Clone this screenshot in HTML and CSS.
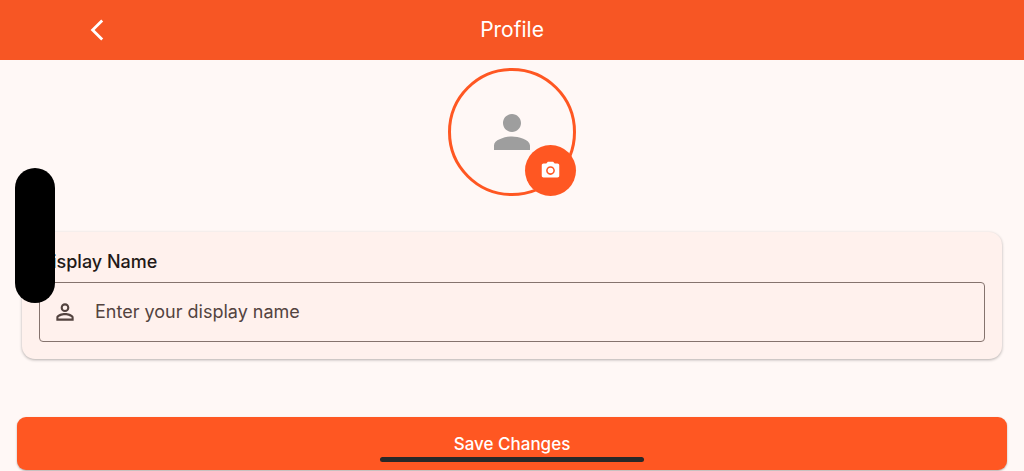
FILE: index.html
```html
<!DOCTYPE html>
<html lang="en">
<head>
<meta charset="utf-8">
<meta name="viewport" content="width=device-width, initial-scale=1">
<title>Profile</title>
<link rel="stylesheet" href="styles.css">
</head>
<body>
<header class="app-bar">
  <button class="back" type="button" aria-label="Back">
    <svg width="14" height="22" viewBox="0 0 14 22" fill="none" stroke="currentColor" stroke-width="2.8"><path d="M12.2 1.4 2.6 11l9.600 9.600"/></svg>
  </button>
  <h1 class="title">Profile</h1>
</header>
<main class="content">
  <div class="avatar">
    <svg class="person" viewBox="4 4 16 16" fill="currentColor" aria-hidden="true"><path d="M12 12c2.21 0 4-1.790 4-4s-1.790-4-4-4-4 1.790-4 4 1.790 4 4 4zm0 2c-2.670 0-8 1.340-8 4v2h16v-2c0-2.660-5.330-4-8-4z"/></svg>
    <button class="camera" type="button" aria-label="Change photo">
      <svg width="21" height="21" viewBox="0 0 24 24" fill="currentColor"><path fill-rule="evenodd" d="M9 2 7.170 4H4c-1.100 0-2 .9-2 2v12c0 1.100.9 2 2 2h16c1.100 0 2-.9 2-2V6c0-1.100-.9-2-2-2h-3.170L15 2H9zm3 15c-2.760 0-5-2.240-5-5s2.240-5 5-5 5 2.240 5 5-2.240 5-5 5z"/><circle cx="12" cy="12" r="3.200"/></svg>
    </button>
  </div>
  <form class="form">
    <section class="card">
      <label class="label" for="display-name">Display Name</label>
      <div class="field">
        <svg class="field-icon" viewBox="0 0 24 24" fill="currentColor" aria-hidden="true"><path d="M12 5.900a2.100 2.100 0 1 1 0 4.200 2.100 2.100 0 0 1 0-4.200m0 9c2.970 0 6.100 1.460 6.100 2.100v1.100H5.900V17c0-.64 3.130-2.100 6.100-2.100M12 4C9.790 4 8 5.790 8 8s1.790 4 4 4 4-1.790 4-4-1.790-4-4-4zm0 9c-2.670 0-8 1.340-8 4v3h16v-3c0-2.660-5.330-4-8-4z"/></svg>
        <input class="input" id="display-name" type="text" placeholder="Enter your display name">
      </div>
    </section>
    <button class="save" type="submit">Save Changes</button>
  </form>
</main>
<div class="island"></div>
<div class="home-bar"></div>
</body>
</html>
```
FILE: styles.css
```css
* {
  box-sizing: border-box;
}

body {
  margin: 0;
  position: relative;
  background: #fff8f6;
  color: #231917;
  font-family: Inter, "Liberation Sans", sans-serif;
}

button {
  border: 0;
  padding: 0;
  font: inherit;
  color: #fff;
}

svg {
  display: block;
}

.app-bar {
  display: grid;
  grid-template-columns: 1fr auto 1fr;
  align-items: center;
  height: 60px;
  padding: 0 80px;
  background: #f75624;
  color: #fff;
}

.back {
  display: grid;
  place-items: center;
  width: 34px;
  height: 40px;
  background: transparent;
}

.title {
  margin: 0;
  font-size: 21px;
  font-weight: 400;
  line-height: 28px;
}

.content {
  padding: 8px 17px 1px;
}

.avatar {
  position: relative;
  display: grid;
  place-items: center;
  width: 128px;
  height: 128px;
  margin: 0 auto;
  border: 3px solid #ff5722;
  border-radius: 50%;
}

.person {
  width: 36px;
  height: 36px;
  color: #9e9e9e;
}

.camera {
  position: absolute;
  right: -3px;
  bottom: -3px;
  display: grid;
  place-items: center;
  width: 51px;
  height: 51px;
  border-radius: 50%;
  background: #ff5722;
}

.form {
  display: flex;
  flex-direction: column;
  gap: 58px;
  margin-top: 36px;
}

.card {
  margin: 0 5px;
  padding: 17px;
  border-radius: 13px;
  background: #fff1ed;
  box-shadow: 0 1px 3px rgba(0, 0, 0, 0.3);
}

.label {
  display: block;
  margin-bottom: 7px;
  font-size: 18px;
  font-weight: 500;
  line-height: 26px;
}

.field {
  display: flex;
  align-items: center;
  gap: 17px;
  height: 60px;
  padding: 0 12px;
  border: 1px solid #85736e;
  border-radius: 4px;
  color: #53433f;
}

.field-icon {
  flex: none;
  width: 26px;
  height: 26px;
}

.input {
  flex: 1;
  min-width: 0;
  padding: 0;
  border: 0;
  outline: 0;
  background: transparent;
  color: #231917;
  font: inherit;
  font-size: 18px;
  line-height: 26px;
}

.input::placeholder {
  color: #53433f;
  opacity: 1;
}

.save {
  height: 53px;
  border-radius: 9px;
  background: #ff5722;
  box-shadow: 0 1px 2px rgba(0, 0, 0, 0.3);
  font-size: 17px;
  font-weight: 500;
}

.island {
  position: absolute;
  left: 15px;
  top: 168px;
  width: 40px;
  height: 135px;
  border-radius: 20px;
  background: #000;
}

.home-bar {
  position: absolute;
  left: 50%;
  bottom: 9px;
  width: 264px;
  height: 5px;
  border-radius: 3px;
  background: #282828;
  transform: translateX(-50%);
}
```
